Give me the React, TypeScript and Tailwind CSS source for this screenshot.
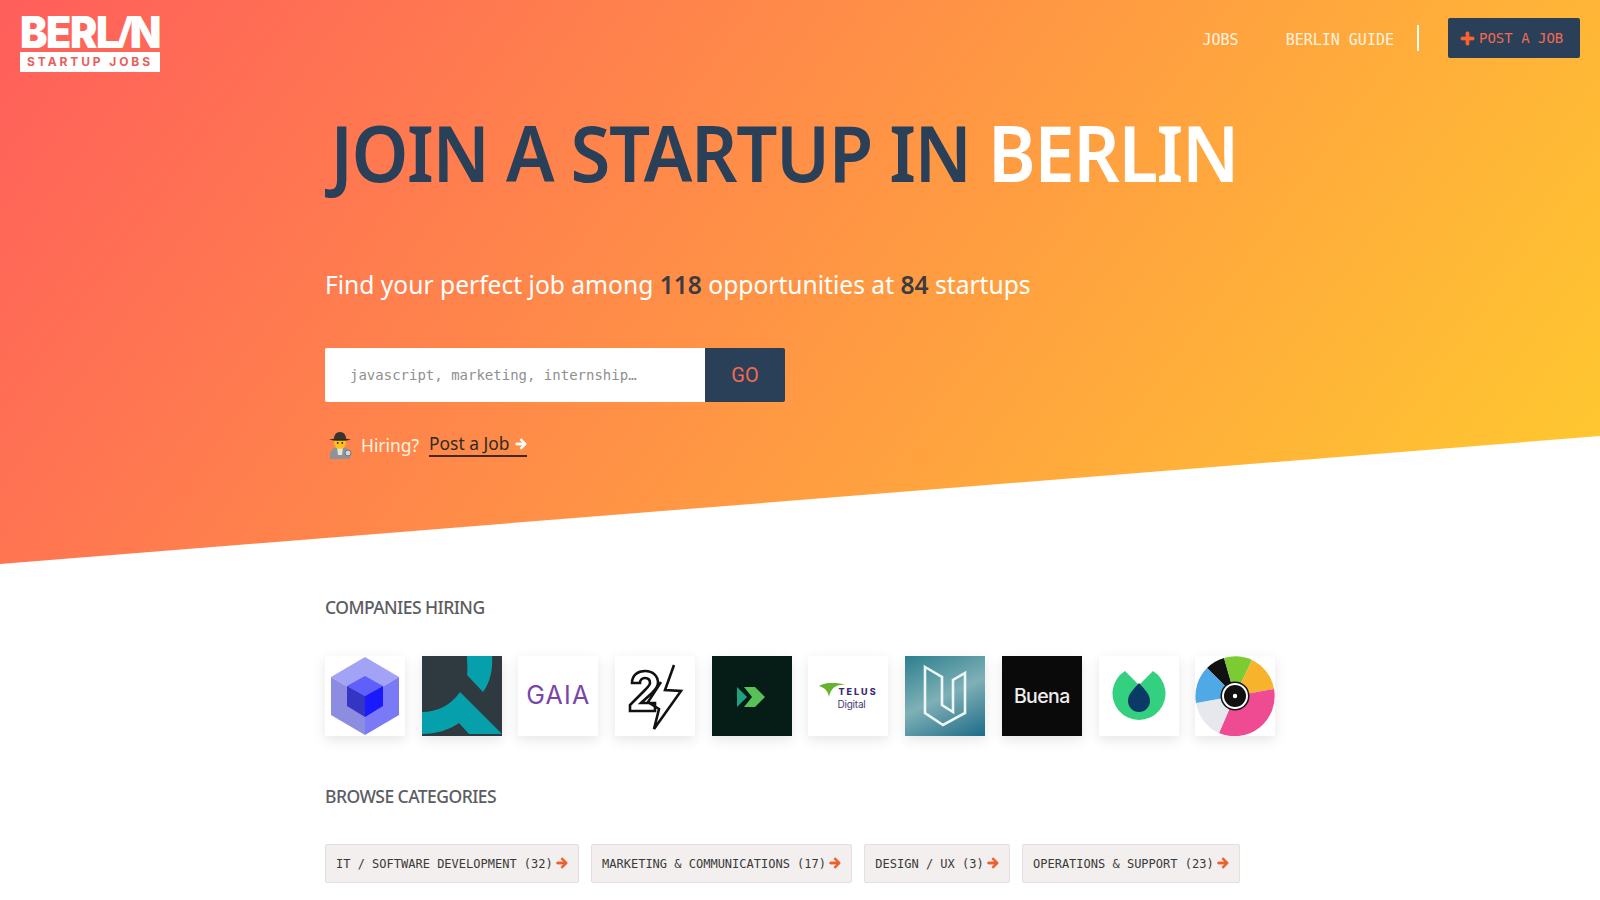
import { FaArrowRight, FaPlus } from "react-icons/fa";

const mono = "font-['DejaVu_Sans_Mono','Liberation_Mono',monospace]";
const categories = [
  "IT / SOFTWARE DEVELOPMENT (32)",
  "MARKETING & COMMUNICATIONS (17)",
  "DESIGN / UX (3)",
  "OPERATIONS & SUPPORT (23)",
];

function Detective() {
  return (
    <svg viewBox="0 0 24 28" className="h-[28px] w-[24px]">
      <path d="M2 22c1-4 5-6 10-6s9 2 10 6v6H2z" fill="#8f9397" />
      <path d="M9 16h6l-1 8h-4z" fill="#e9e4da" />
      <circle cx="12" cy="12" r="6" fill="#fcc21b" />
      <circle cx="9.7" cy="12" r="0.9" fill="#3c2a1e" />
      <circle cx="14.3" cy="12" r="0.9" fill="#3c2a1e" />
      <path d="M1 8.5c4-1.5 18-1.5 22 0-4 1.8-18 1.8-22 0z" fill="#2f2a26" />
      <path d="M6 8c0-4 2-7 6-7s6 3 6 7z" fill="#3a332d" />
      <circle cx="20" cy="22" r="3" fill="#cfd6da" stroke="#6d7378" />
    </svg>
  );
}

function LogoCard({ children, bg = "bg-white" }: { children: React.ReactNode; bg?: string }) {
  return (
    <div className={`h-[80px] w-[80px] shrink-0 overflow-hidden shadow-[0_4px_12px_rgba(0,0,0,0.1)] ${bg}`}>
      {children}
    </div>
  );
}

const logos = [
  <LogoCard key="cube">
    <svg viewBox="0 0 80 80" className="size-full">
      <path d="M40 1 74 21 40 41 6 21z" fill="#a3a3f5" />
      <path d="M6 21 40 41V79L6 59z" fill="#8c8ce0" />
      <path d="M74 21 40 41V79L74 59z" fill="#7a7af7" />
      <path d="M40 20 58 30 40 40 22 30z" fill="#5f5ffb" />
      <path d="M22 30 40 40V61L22 50z" fill="#3535c4" />
      <path d="M58 30 40 40V61L58 50z" fill="#1a1afc" />
    </svg>
  </LogoCard>,
  <LogoCard key="teal">
    <svg viewBox="0 0 80 80" className="size-full">
      <rect width="80" height="80" fill="#2e3a3f" />
      <path d="M45 0h25c1 14-2 26-9 36L45 19c1-6 0-12 0-19z" fill="#06a0ac" />
      <path d="M0 56c15 0 28-6 38-20l42 42H47L37 67C27 74 14 78 0 78z" fill="#06a0ac" />
    </svg>
  </LogoCard>,
  <LogoCard key="gaia">
    <div className="flex size-full items-center justify-center font-['Inter',sans-serif] text-[25px] font-normal tracking-[1.2px] text-[#7a44a8]">
      GAIA
    </div>
  </LogoCard>,
  <LogoCard key="24">
    <svg viewBox="0 0 80 80" className="size-full" fill="none" stroke="#111" strokeWidth="2.6">
      <path d="M17 27C17 19 23 15 30 15 38 15 43 20 43 27 43 31 40 34 37 37L26 47H40V55H15V49L30 34C33 31 35 29 35 27 35 23 33 22 30 22 27 22 25 24 25 27z" />
      <path d="M59 9 50 34 66 35 39 73 44 53 33 46 46 26" />
    </svg>
  </LogoCard>,
  <LogoCard key="arrows">
    <svg viewBox="0 0 80 80" className="size-full">
      <rect width="80" height="80" fill="#061c16" />
      <path d="M25 31 35 41 25 51z" fill="#1fa27f" />
      <path d="M32 31h11l10 10-10 10H32l8-10z" fill="#58c157" />
    </svg>
  </LogoCard>,
  <LogoCard key="telus">
    <div className="relative flex size-full flex-col items-start pl-[29px] pt-[31px] font-['Inter',sans-serif] leading-none">
      <svg viewBox="0 0 27 14" className="absolute left-[11px] top-[27px] h-[14px] w-[27px]">
        <path d="M0 3C7-1 18-1 27 2 17 1 12 5 10 14 9 8 6 5 0 3z" fill="#66b32e" />
      </svg>
      <span className="ml-[1px] text-[9px] font-extrabold tracking-[2px] text-[#3d2a6b]">TELUS</span>
      <span className="mt-[3px] text-[10px] tracking-[-0.2px] text-[#4b3b78]">Digital</span>
    </div>
  </LogoCard>,
  <LogoCard key="u" bg="bg-[linear-gradient(155deg,#2c7f8e,#7fb0b6_50%,#1d6b88)]">
    <svg viewBox="0 0 80 80" className="size-full" fill="none" stroke="#eef6f6" strokeWidth="2.6">
      <path d="M20 11 37 21V49L48 56V24L60 17V57L38 69 20 57z" />
    </svg>
  </LogoCard>,
  <LogoCard key="buena" bg="bg-[#0a0a0a]">
    <div className="flex size-full items-center justify-center pt-[1px] font-['Inter',sans-serif] text-[19.5px] font-medium tracking-[-0.6px] text-[#eeeeee]">
      Buena
    </div>
  </LogoCard>,
  <LogoCard key="drop">
    <svg viewBox="0 0 80 80" className="size-full">
      <path d="M26 15 40 29 54 15A26.5 26.5 0 1 1 26 15z" fill="#33d17f" />
      <path d="M40 27c6 7 11 11 11 18a11 11 0 0 1-22 0c0-7 5-11 11-18z" fill="#0b3a66" />
    </svg>
  </LogoCard>,
  <LogoCard key="wheel">
    <svg viewBox="0 0 80 80" className="size-full">
      <path d="M40 40 12 12A40 40 0 0 1 29 2z" fill="#111" />
      <path d="M40 40 29 2A40 40 0 0 1 57 4z" fill="#7ccb32" />
      <path d="M40 40 57 4A40 40 0 0 1 79 33z" fill="#f7b32b" />
      <path d="M40 40 79 33A40 40 0 0 1 24 77z" fill="#ef4b92" />
      <path d="M40 40 24 77A40 40 0 0 1 1 47z" fill="#e7e8ee" />
      <path d="M40 40 1 47A40 40 0 0 1 12 12z" fill="#4fa9e6" />
      <circle cx="40" cy="40" r="14.5" fill="#111" />
      <circle cx="40" cy="40" r="13" fill="#fff" />
      <circle cx="40" cy="40" r="11" fill="#111" />
      <circle cx="40" cy="40" r="2.2" fill="#fff" />
    </svg>
  </LogoCard>,
];

export default function App() {
  return (
    <div className="h-[900px] overflow-hidden bg-white font-['Noto_Sans',sans-serif]">
      <section className="h-[564px] bg-[linear-gradient(126deg,#ff5e5b,#ffcc2e)] [clip-path:polygon(0_0,100%_0,100%_436px,0_564px)]">
        <header className="flex items-start justify-between pl-[20px] pr-[20px] pt-[16px]">
          <div className="w-[140px] font-['Inter',sans-serif] leading-none">
            <div className="flex h-[32px] w-max origin-left scale-x-[0.935] items-center text-[44px] font-black leading-[32px] tracking-[-1.5px] text-white">
              <span>BERL</span>
              <span className="mx-[1px] -skew-x-[20deg] font-bold">I</span>
              <span>N</span>
            </div>
            <div className="mt-[4px] flex h-[20px] items-center justify-center bg-white text-[12px] font-bold tracking-[2.9px] text-[#e8605a]">
              STARTUP JOBS
            </div>
          </div>
          <nav className={`flex items-center ${mono} pt-[2px] text-[15px] text-[#fff3e0]`}>
            <a className="mr-[47px] pt-[4px]">JOBS</a>
            <a className="mr-[23px] pt-[4px]">BERLIN GUIDE</a>
            <span className="mr-[29px] h-[26px] w-[2px] bg-white" />
            <a className="flex h-[40px] w-[132px] items-center gap-[4px] rounded-[2px] bg-[#2a3f58] pl-[12px] text-[14px] text-[#f26b50]">
              <FaPlus className="size-[15px] stroke-current stroke-[30px] text-[#ff6430]" />
              POST A JOB
            </a>
          </nav>
        </header>

        <div className="ml-[325px]">
          <h1 className="mt-[32px] origin-left scale-x-[0.928] pl-[6px] text-[78px] font-semibold leading-[96px] tracking-[-1.5px] text-[#2a3f58]">
            JOIN A STARTUP IN <span className="text-white">BERLIN</span>
          </h1>
          <p className="mt-[68px] text-[24.6px] leading-[34px] text-white">
            Find your perfect job among <strong className="font-semibold text-[#3b3b40]">118</strong> opportunities at{" "}
            <strong className="font-semibold text-[#3b3b40]">84</strong> startups
          </p>
          <form className="mt-[46px] flex h-[54px] w-[460px]">
            <div className={`flex w-[380px] items-center rounded-l-[2px] bg-white pl-[25px] ${mono} text-[14px] text-[#8f8f8f]`}>
              javascript, marketing, internship…
            </div>
            <button className="w-[80px] rounded-r-[2px] bg-[#2a3f58] font-['Roboto',sans-serif] text-[20px] font-normal text-[#f26b50]">
              GO
            </button>
          </form>
          <div className="mt-[29px] flex items-center pl-[3px] text-[17.4px]">
            <Detective />
            <span className="ml-[9px] text-[#fff3e0]">Hiring?</span>
            <a className="ml-[10px] flex -translate-y-[1px] items-center gap-[6px] border-b-2 border-[#40281c] leading-[23px] text-[#2f2a26]">
              Post a Job
              <FaArrowRight className="size-[12px] translate-y-[1px] stroke-current stroke-[40px] text-white" />
            </a>
          </div>
        </div>
      </section>

      <main className="ml-[325px]">
        <h2 className="mt-[30px] text-[17.5px] font-medium leading-[26px] tracking-[-0.55px] text-[#5b5d63]">COMPANIES HIRING</h2>
        <div className="mt-[36px] flex gap-[16.7px]">{logos}</div>
        <h2 className="mt-[47px] text-[17.5px] font-medium leading-[26px] tracking-[-0.55px] text-[#5b5d63]">BROWSE CATEGORIES</h2>
        <div className="mt-[35px] flex gap-[12px]">
          {categories.map((c) => (
            <a
              key={c}
              className={`flex h-[39px] items-center gap-[3.3px] rounded-[2px] border border-[#e4dfdd] bg-[#f2efee] px-[10px] ${mono} text-[12px] text-[#3a3a3a]`}
            >
              {c}
              <FaArrowRight className="size-[12px] -translate-y-[1px] stroke-current stroke-[40px] text-[#ee5f2c]" />
            </a>
          ))}
        </div>
      </main>
    </div>
  );
}
